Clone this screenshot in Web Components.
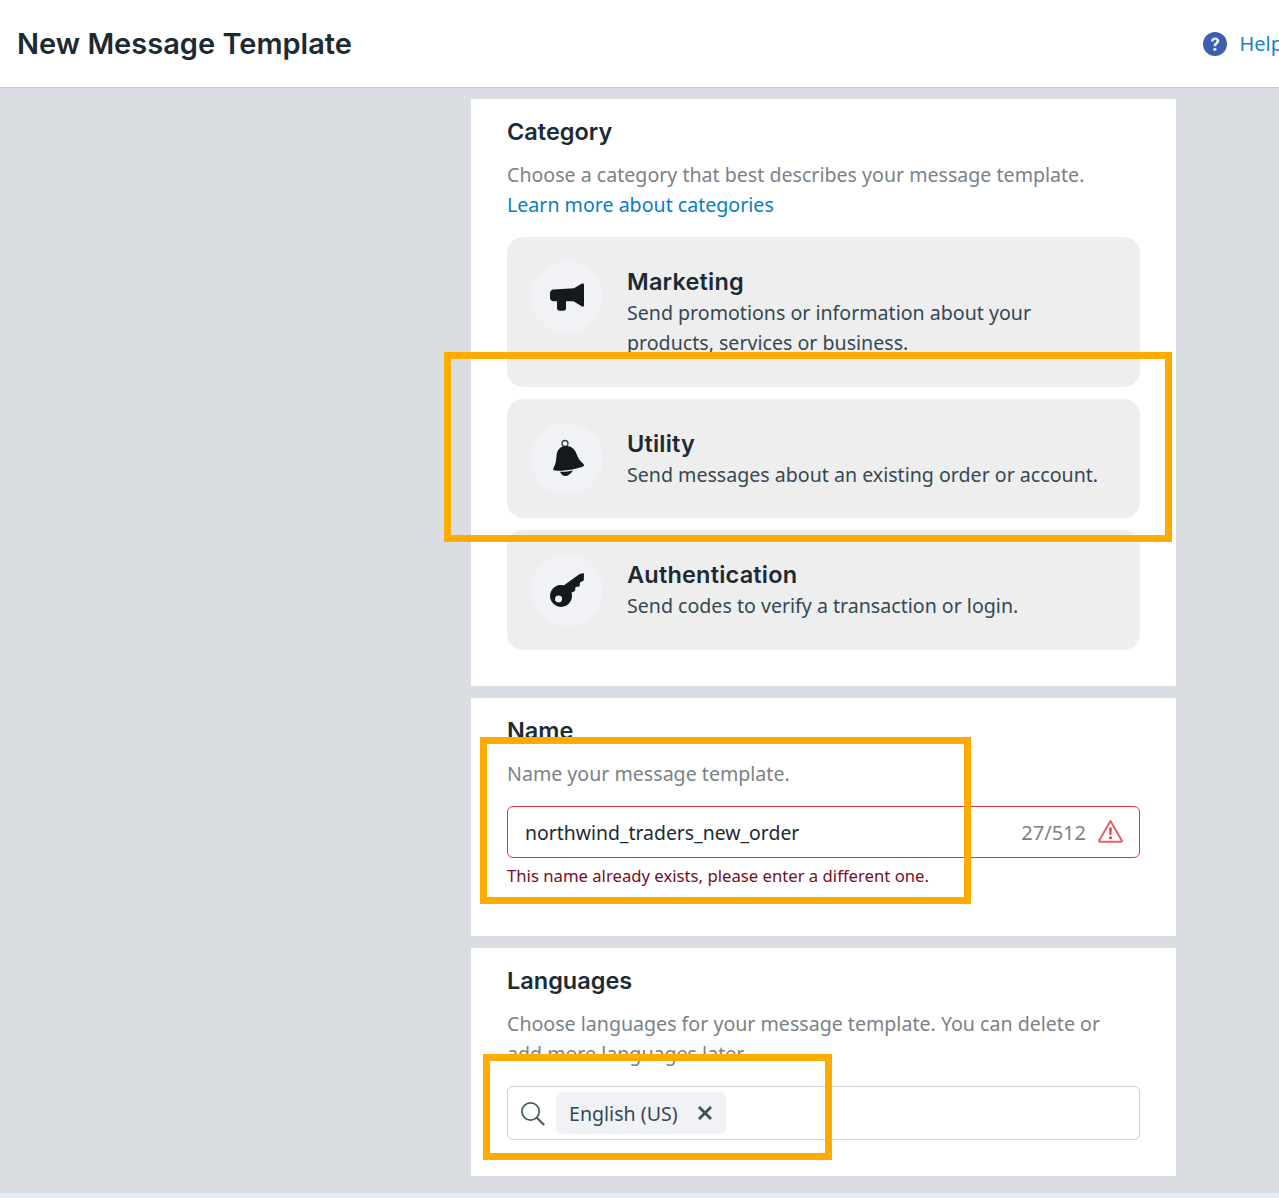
<!DOCTYPE html>
<html>
<head>
<meta charset="utf-8">
<title>New Message Template</title>
<style>
    html, body { margin: 0; padding: 0; }
    body {
        position: relative;
        height: 1198px;
        overflow: hidden;
        background: #dadde1;
        font-family: "Noto Sans", sans-serif;
        color: #1c2b33;
    }
    .strip { position: absolute; left: 0; right: 0; top: 1193px; height: 5px; background: #e4eef8; }
</style>
</head>
<body>
<page-header title="New Message Template"></page-header>
<page-columns>
    <form-card heading="Category" height="587">
        <p-text>Choose a category that best describes your message template.<br><a-link>Learn more about categories</a-link></p-text>
        <category-list>
            <category-option title="Marketing" icon="megaphone" style="height:150px">Send promotions or information about your products, services or business.</category-option>
            <category-option title="Utility" icon="bell" style="height:119px">Send messages about an existing order or account.</category-option>
            <category-option title="Authentication" icon="key" style="height:120px">Send codes to verify a transaction or login.</category-option>
        </category-list>
    </form-card>
    <form-card heading="Name" height="238">
        <p-text>Name your message template.</p-text>
        <name-field value="northwind_traders_new_order" count="27/512" error="This name already exists, please enter a different one."></name-field>
    </form-card>
    <form-card heading="Languages" height="228">
        <p-text>Choose languages for your message template. You can delete or add more languages later.</p-text>
        <language-field language="English (US)"></language-field>
    </form-card>
</page-columns>
<div class="strip"></div>
<mark-box style="left:444px;top:352px;width:728px;height:190px"></mark-box>
<mark-box style="left:480px;top:737px;width:491px;height:167px"></mark-box>
<mark-box style="left:483px;top:1054px;width:349px;height:106px"></mark-box>

<script>
const ICONS = {
    megaphone: `<svg width="34" height="28" viewBox="0 0 34 28"><path fill="#14191d" d="M32 .6c1.200-.5 2 .2 2 1.200v20.400c0 1.300-1 1.800-2 1.300l-8.500-5.300H3.500C1.500 18.200 0 16.800 0 15v-4.500C0 8.200 1.500 6.800 3.500 6.600L24 5.300z"/><path fill="#14191d" d="M7 18h9v7.300c0 1.500-1 2.500-2.500 2.500h-4C8 27.800 7 26.800 7 25.300z"/></svg>`,
    bell: `<svg width="32" height="38" viewBox="-2 0 32 38" style="overflow:visible"><circle cx="12" cy="3.500" r="3" fill="none" stroke="#3a4045" stroke-width="1.300"/><path fill="#14191d" d="M12 6c6-.5 10 3 11.500 8 1.500 4 3.500 7 7 10 1 1 .5 2-.5 2.500-6 2.500-20 5-28 4-2 0-2.200-1.500-1.300-3 1.800-2.500 2.300-6.500 2.800-11.500C4 10 7 6.500 12 6z"/><path fill="#14191d" d="M7 31.800c4 .2 9-.3 13-1.300-2 3.500-5 5.500-8 5.500-2.500 0-4-2-5-4.200z"/></svg>`,
    key: `<svg width="34" height="34" viewBox="0 0 34 34"><path fill="#14191d" fill-rule="evenodd" d="M14 12.300 30 .8l4-.6-.2 7.300-3.800 2-.5 4-4 .5-.5 4-3.500 1.500A11 11 0 1 1 14 12.300zM8.500 22.500a3.500 3.500 0 1 0 .1 7 3.500 3.500 0 0 0-.1-7z"/></svg>`
}

class PageHeader extends HTMLElement {
    constructor () {
        super()
        this.attachShadow({ mode: 'open' })
        this.shadowRoot.innerHTML = `
            <style>
                :host {
                    display: flex;
                    align-items: center;
                    justify-content: space-between;
                    height: 87px;
                    padding: 0 0 0 17px;
                    background: #fff;
                    border-bottom: 1px solid #c6cacf;
                    overflow: hidden;
                }
                h1 {
                    margin: 2px 0 0;
                    font: 600 29px/1.2 Inter, sans-serif;
                    color: #1c2b33;
                }
                .help {
                    display: flex;
                    align-items: center;
                    gap: 12px;
                    margin-right: -4px;
                    font-size: 20px;
                    color: #1a82c9;
                }
            </style>
            <h1>${this.getAttribute('title')}</h1>
            <div class="help">
                <svg width="24" height="24" viewBox="0 0 24 24"><circle cx="12" cy="12" r="12" fill="#3c60ae"/><path d="M7.800 9.300c.2-2.500 2-3.900 4.300-3.900s4.200 1.400 4.200 3.500c0 3-3.100 2.900-3.100 5.300h-2.600c0-3.500 2.900-3.500 2.900-5.100 0-.8-.6-1.300-1.400-1.300-.9 0-1.500.6-1.600 1.600z" fill="#e8ecf6"/><circle cx="11.900" cy="17.300" r="1.600" fill="#e8ecf6"/></svg>
                <span>Help</span>
            </div>
        `
    }
}

class PageColumns extends HTMLElement {
    constructor () {
        super()
        this.attachShadow({ mode: 'open' })
        this.shadowRoot.innerHTML = `
            <style>
                :host {
                    display: flex;
                    flex-direction: column;
                    gap: 12px;
                    padding: 11px 0 0 471px;
                    width: 705px;
                }
            </style>
            <slot></slot>
        `
    }
}

class FormCard extends HTMLElement {
    constructor () {
        super()
        this.attachShadow({ mode: 'open' })
        this.shadowRoot.innerHTML = `
            <style>
                :host {
                    display: block;
                    box-sizing: border-box;
                    height: ${this.getAttribute('height')}px;
                    padding: 17px 36px 0;
                    background: #fff;
                }
                h2 {
                    margin: 0 0 12px;
                    font: 600 23.500px/32px Inter, sans-serif;
                    color: #1c2b33;
                }
            </style>
            <h2>${this.getAttribute('heading')}</h2>
            <slot></slot>
        `
    }
}

class PText extends HTMLElement {
    constructor () {
        super()
        this.attachShadow({ mode: 'open' })
        this.shadowRoot.innerHTML = `
            <style>
                :host {
                    display: block;
                    font-size: 19.600px;
                    line-height: 30px;
                    color: #7a8288;
                }
            </style>
            <slot></slot>
        `
    }
}

class ALink extends HTMLElement {
    constructor () {
        super()
        this.attachShadow({ mode: 'open' })
        this.shadowRoot.innerHTML = `
            <style>:host { color: #0a7cc4; }</style>
            <slot></slot>
        `
    }
}

class CategoryList extends HTMLElement {
    constructor () {
        super()
        this.attachShadow({ mode: 'open' })
        this.shadowRoot.innerHTML = `
            <style>
                :host {
                    display: flex;
                    flex-direction: column;
                    gap: 12px;
                    margin-top: 17px;
                }
            </style>
            <slot></slot>
        `
    }
}

class CategoryOption extends HTMLElement {
    constructor () {
        super()
        this.attachShadow({ mode: 'open' })
        this.shadowRoot.innerHTML = `
            <style>
                :host {
                    display: flex;
                    gap: 24px;
                    box-sizing: border-box;
                    padding: 24px;
                    background: #eeeeee;
                    border-radius: 16px;
                    color: #1c2b33;
                }
                .circle {
                    flex: none;
                    display: flex;
                    align-items: center;
                    justify-content: center;
                    width: 72px;
                    height: 72px;
                    border-radius: 50%;
                    background: #f0f2f5;
                }
                h3 {
                    margin: 5px 0 0;
                    font: 600 23.500px/31.500px Inter, sans-serif;
                    letter-spacing: 0.2px;
                }
                .sub {
                    font-size: 19.600px;
                    line-height: 30px;
                    color: #344854;
                }
            </style>
            <div class="circle">${ICONS[this.getAttribute('icon')]}</div>
            <div>
                <h3>${this.getAttribute('title')}</h3>
                <div class="sub"><slot></slot></div>
            </div>
        `
    }
}

class NameField extends HTMLElement {
    constructor () {
        super()
        this.attachShadow({ mode: 'open' })
        this.shadowRoot.innerHTML = `
            <style>
                :host { display: block; margin-top: 17px; }
                .box {
                    display: flex;
                    align-items: center;
                    box-sizing: border-box;
                    height: 52px;
                    padding: 0 16px 0 17px;
                    border: 1px solid #dc3545;
                    border-radius: 6px;
                    font-size: 19.400px;
                    color: #1c2b33;
                }
                .value { flex: 1; }
                .count { color: #7a8288; margin-right: 12px; font-size: 20px; }
                .error {
                    margin-top: 4px;
                    font-size: 16.700px;
                    line-height: 28px;
                    color: #7a0c1e;
                }
            </style>
            <div class="box">
                <span class="value">${this.getAttribute('value')}</span>
                <span class="count">${this.getAttribute('count')}</span>
                <svg width="25" height="24" viewBox="0 0 25 24" style="margin-top:-3px"><path d="M12.500 2 23.800 21.500c.3.600 0 1.300-.7 1.300H1.900c-.7 0-1-.7-.7-1.300z" fill="none" stroke="#e2606c" stroke-width="2" stroke-linejoin="round"/><path d="M11.200 8.500h2.600l-.4 7.500h-1.800z" fill="#dc3545"/><circle cx="12.500" cy="18.800" r="1.500" fill="#dc3545"/></svg>
            </div>
            <div class="error">${this.getAttribute('error')}</div>
        `
    }
}

class LanguageField extends HTMLElement {
    constructor () {
        super()
        this.attachShadow({ mode: 'open' })
        this.shadowRoot.innerHTML = `
            <style>
                :host { display: block; margin-top: 17px; }
                .box {
                    display: flex;
                    align-items: center;
                    gap: 11px;
                    box-sizing: border-box;
                    height: 54px;
                    padding: 0 12px;
                    border: 1px solid #cbd0d6;
                    border-radius: 6px;
                }
                .chip {
                    display: flex;
                    align-items: center;
                    gap: 19px;
                    height: 42px;
                    padding: 0 13px;
                    border-radius: 6px;
                    background: #f0f2f5;
                    font-size: 19.600px;
                    color: #344854;
                }
            </style>
            <div class="box">
                <svg width="25" height="25" viewBox="0 0 26 26"><circle cx="11" cy="11" r="9" fill="none" stroke="#4b5a63" stroke-width="1.800"/><path d="M17.500 17.500 24.500 24.500" stroke="#4b5a63" stroke-width="2.200" stroke-linecap="round"/></svg>
                <div class="chip">
                    <span>${this.getAttribute('language')}</span>
                    <svg width="16" height="16" viewBox="0 0 16 16"><path d="M2 2 14 14M14 2 2 14" stroke="#3f4f59" stroke-width="2.800"/></svg>
                </div>
            </div>
        `
    }
}

class MarkBox extends HTMLElement {
    constructor () {
        super()
        this.attachShadow({ mode: 'open' })
        this.shadowRoot.innerHTML = `
            <style>
                :host {
                    position: absolute;
                    box-sizing: border-box;
                    border: 7px solid #ffab00;
                }
            </style>
        `
    }
}

customElements.define('page-header', PageHeader)
customElements.define('page-columns', PageColumns)
customElements.define('form-card', FormCard)
customElements.define('p-text', PText)
customElements.define('a-link', ALink)
customElements.define('category-list', CategoryList)
customElements.define('category-option', CategoryOption)
customElements.define('name-field', NameField)
customElements.define('language-field', LanguageField)
customElements.define('mark-box', MarkBox)
</script>
</body>
</html>
